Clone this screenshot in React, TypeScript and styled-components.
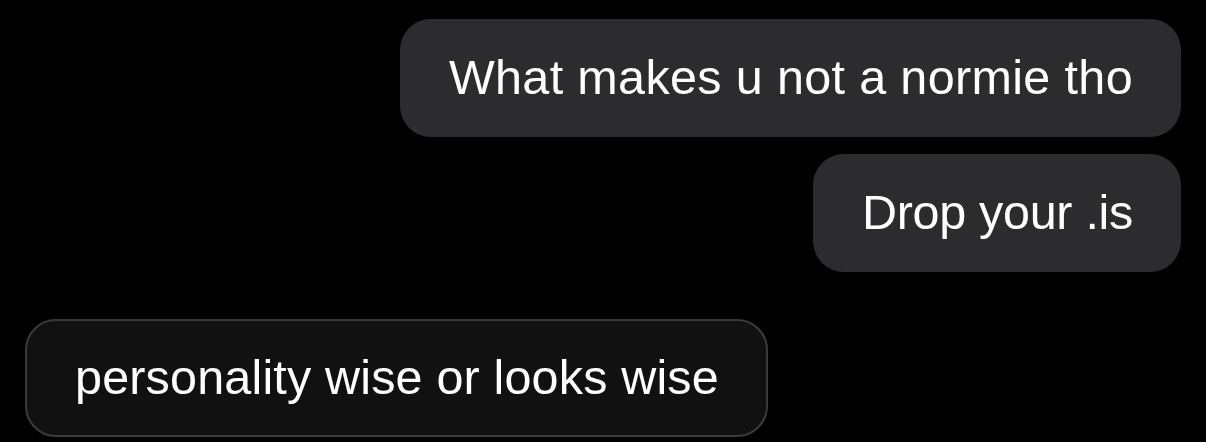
import React from "react";
import styled, { createGlobalStyle } from "styled-components";

const Global = createGlobalStyle`
  html, body { margin: 0; padding: 0; background: #000; }
  body { font-family: "Liberation Sans", Arial, "Noto Sans", sans-serif; }
`;

const Thread = styled.div`
  display: flex;
  flex-direction: column;
  padding: 19px 25px 0 25px;
  width: 1206px;
  height: 442px;
  box-sizing: border-box;
  background: #000;
`;

const Row = styled.div<{ $mine?: boolean; $gap: number }>`
  display: flex;
  justify-content: ${(p) => (p.$mine ? "flex-end" : "flex-start")};
  margin-top: ${(p) => p.$gap}px;
`;

const Bubble = styled.div<{ $mine?: boolean; $tracking: number }>`
  box-sizing: border-box;
  height: 118px;
  padding: ${(p) => (p.$mine ? "0 48px 3px 49px" : "0 47px 3px 48px")};
  display: flex;
  align-items: center;
  border-radius: 31px;
  background: ${(p) => (p.$mine ? "#2c2c2e" : "#111111")};
  border: ${(p) => (p.$mine ? "none" : "2px solid #3b3b3e")};
  color: #ffffff;
  font-size: 48.5px;
  font-weight: 400;
  letter-spacing: ${(p) => p.$tracking}px;
  line-height: 56px;
  white-space: nowrap;
`;

const messages = [
  { text: "What makes u not a normie tho", mine: true, gap: 0, tracking: 0.35 },
  { text: "Drop your .is", mine: true, gap: 17, tracking: -0.3 },
  { text: "personality wise or looks wise", mine: false, gap: 47, tracking: 0.17 },
];

export default function App() {
  return (
    <>
      <Global />
      <Thread>
        {messages.map((m, i) => (
          <Row key={i} $mine={m.mine} $gap={m.gap}>
            <Bubble $mine={m.mine} $tracking={m.tracking}>
              {m.text}
            </Bubble>
          </Row>
        ))}
      </Thread>
    </>
  );
}
